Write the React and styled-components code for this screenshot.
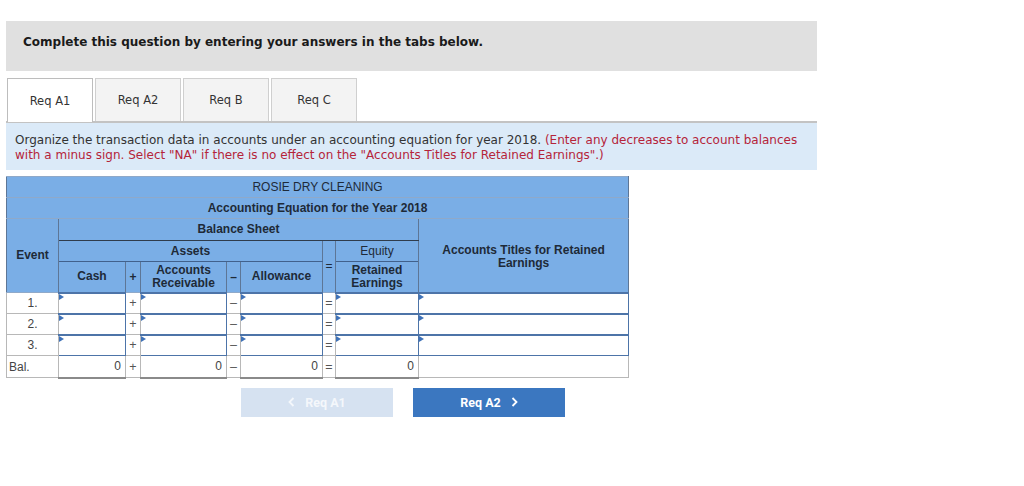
import styled, { createGlobalStyle } from 'styled-components';

const Global = createGlobalStyle`
  body {
    margin: 0;
    background: #fff;
    font-family: "DejaVu Sans", Verdana, sans-serif;
  }
`;

const Page = styled.div`
  padding: 21px 0 0 6px;
  width: 811px;
`;

const Banner = styled.div`
  height: 50px;
  box-sizing: border-box;
  background: #e0e0e0;
  padding: 14px 0 0 17px;
  font-size: 12px;
  line-height: 15px;
  font-weight: bold;
  color: #1a1a1a;
`;

const TabBar = styled.div`
  margin-top: 7px;
  display: flex;
  gap: 2px;
  padding-left: 1px;
  border-bottom: 2px solid #c3c3c3;
  height: 43px;
`;

const Tab = styled.div`
  width: 86px;
  height: ${p => (p.$active ? '44px' : '43px')};
  box-sizing: border-box;
  border: 1px solid ${p => (p.$active ? '#bdbdbd' : '#cfcfcf')};
  border-bottom: none;
  background: ${p => (p.$active ? '#fff' : '#f3f3f3')};
  display: flex;
  align-items: center;
  justify-content: center;
  font-size: 11.5px;
  color: #333;
  position: relative;
  z-index: 1;
`;

const Instructions = styled.div`
  background: #dbeaf8;
  padding: 10px 9px 7px 9px;
  font-size: 12px;
  line-height: 15px;
  color: #333;
  white-space: nowrap;
`;

const Warn = styled.span`
  color: #b5243a;
`;

const Table = styled.table`
  margin-top: 6px;
  border-collapse: collapse;
  table-layout: fixed;
  width: 622px;
  font-family: "Liberation Sans", Arial, sans-serif;
  font-size: 12px;
  border: 1px solid #9a9a9a;
`;

const Head = styled.th`
  background: #7aaee6;
  color: #1e2a38;
  font-weight: ${p => (p.$bold ? 'bold' : 'normal')};
  border: 1px solid;
  border-color: ${p => p.$line || '#8fa9c9 #5d7696'};
  padding: ${p => (p.$drop ? '3px 2px 0' : '0 2px')};
  line-height: 13px;
  text-align: center;
  vertical-align: middle;
`;

const HeadRow = styled.tr`
  height: ${p => p.$h}px;
`;

const Row = styled.tr`
  height: ${p => p.$h || 21}px;
`;

const EventCell = styled.td`
  border: 1px solid #b8b8b8;
  background: #fff;
  color: #444;
  text-align: ${p => (p.$left ? 'left' : 'center')};
  padding: 0 0 0 ${p => (p.$left ? '2px' : '0')};
`;

const OpCell = styled.td`
  border: 1px solid #b8b8b8;
  background: #fff;
  color: #555;
  text-align: center;
  padding: 0;
  font-size: 12.5px;
`;

const Field = styled.td`
  border: 1px solid #4d74a8;
  border-top: 2px solid #4d74a8;
  background: #fff;
  padding: 0;
  position: relative;

  &::before {
    content: '';
    position: absolute;
    left: 0;
    top: 0;
    border-top: 3px solid transparent;
    border-bottom: 3px solid transparent;
    border-left: 5px solid #3f72b8;
  }
`;

const Total = styled.td`
  border: 1px solid #b8b8b8;
  border-bottom: 2px solid #8a8a8a;
  background: #fff;
  color: #444;
  text-align: right;
  padding: 0 4px 0 0;
`;

const Blank = styled.td`
  border: 1px solid #b8b8b8;
  background: #fff;
`;

const Nav = styled.div`
  display: flex;
  gap: 20px;
  margin: 9px 0 0 235px;
`;

const NavButton = styled.div`
  width: 152px;
  height: 29px;
  display: flex;
  align-items: center;
  justify-content: center;
  gap: 10px;
  font-family: Roboto, "Liberation Sans", sans-serif;
  font-weight: bold;
  font-size: 12.5px;
  color: ${p => (p.$disabled ? '#f4f7fb' : '#fff')};
  background: ${p => (p.$disabled ? '#d6e2f1' : '#3b77c0')};
`;

const Chevron = ({ left }) => (
  <svg width="7" height="10" viewBox="0 0 7 10">
    <path
      d={left ? 'M5.5 1 L1.5 5 L5.5 9' : 'M1.5 1 L5.5 5 L1.5 9'}
      fill="none"
      stroke="currentColor"
      strokeWidth="1.8"
    />
  </svg>
);

const rows = ['1.', '2.', '3.'];

export default function App() {
  return (
    <Page>
      <Global />
      <Banner>Complete this question by entering your answers in the tabs below.</Banner>
      <TabBar>
        <Tab $active>Req A1</Tab>
        <Tab>Req A2</Tab>
        <Tab>Req B</Tab>
        <Tab>Req C</Tab>
      </TabBar>
      <Instructions>
        Organize the transaction data in accounts under an accounting equation for year 2018.{' '}
        <Warn>
          (Enter any decreases to account balances
          <br />
          with a minus sign. Select "NA" if there is no effect on the "Accounts Titles for Retained Earnings".)
        </Warn>
      </Instructions>

      <Table>
        <colgroup>
          <col style={{ width: 52 }} />
          <col style={{ width: 67 }} />
          <col style={{ width: 15 }} />
          <col style={{ width: 86 }} />
          <col style={{ width: 14 }} />
          <col style={{ width: 82 }} />
          <col style={{ width: 13 }} />
          <col style={{ width: 83 }} />
          <col style={{ width: 210 }} />
        </colgroup>
        <thead>
          <HeadRow $h={21}>
            <Head colSpan={9}>ROSIE DRY CLEANING</Head>
          </HeadRow>
          <HeadRow $h={21}>
            <Head colSpan={9} $bold>Accounting Equation for the Year 2018</Head>
          </HeadRow>
          <HeadRow $h={22}>
            <Head rowSpan={3} $bold>Event</Head>
            <Head colSpan={7} $bold $line="#8fa9c9 #5d7696 #2f3c4c">Balance Sheet</Head>
            <Head rowSpan={3} $bold $drop>Accounts Titles for Retained Earnings</Head>
          </HeadRow>
          <HeadRow $h={21}>
            <Head colSpan={5} $bold $line="#2f3c4c #5d7696 #41618c">Assets</Head>
            <Head rowSpan={2}>=</Head>
            <Head $line="#2f3c4c #5d7696 #41618c">Equity</Head>
          </HeadRow>
          <HeadRow $h={31}>
            <Head $bold>Cash</Head>
            <Head $bold>+</Head>
            <Head $bold>Accounts Receivable</Head>
            <Head $bold>–</Head>
            <Head $bold>Allowance</Head>
            <Head $bold>Retained Earnings</Head>
          </HeadRow>
        </thead>
        <tbody>
          {rows.map(r => (
            <Row key={r}>
              <EventCell>{r}</EventCell>
              <Field />
              <OpCell>+</OpCell>
              <Field />
              <OpCell>–</OpCell>
              <Field />
              <OpCell>=</OpCell>
              <Field />
              <Field />
            </Row>
          ))}
          <Row $h={22}>
            <EventCell $left>Bal.</EventCell>
            <Total>0</Total>
            <OpCell>+</OpCell>
            <Total>0</Total>
            <OpCell>–</OpCell>
            <Total>0</Total>
            <OpCell>=</OpCell>
            <Total>0</Total>
            <Blank />
          </Row>
        </tbody>
      </Table>

      <Nav>
        <NavButton $disabled>
          <Chevron left />
          Req A1
        </NavButton>
        <NavButton>
          Req A2
          <Chevron />
        </NavButton>
      </Nav>
    </Page>
  );
}
